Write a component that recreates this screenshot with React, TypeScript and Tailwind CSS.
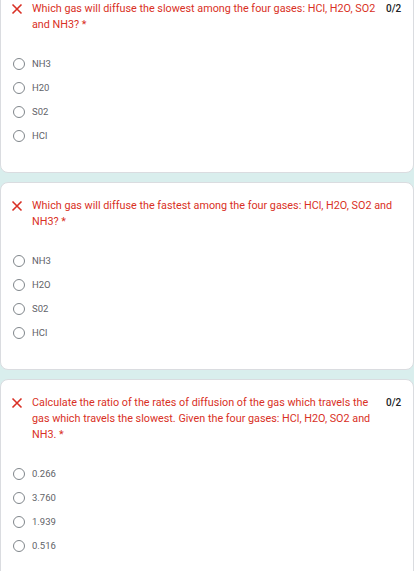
const questions = [
  {
    text: "Which gas will diffuse the slowest among the four gases: HCl, H2O, SO2 and NH3? *",
    score: "0/2",
    options: ["NH3", "H20", "S02", "HCl"],
  },
  {
    text: "Which gas will diffuse the fastest among the four gases: HCl, H2O, SO2 and NH3? *",
    score: "",
    options: ["NH3", "H2O", "S02", "HCl"],
  },
  {
    text: "Calculate the ratio of the rates of diffusion of the gas which travels the gas which travels the slowest. Given the four gases: HCl, H2O, SO2 and NH3. *",
    score: "0/2",
    options: ["0.266", "3.760", "1.939", "0.516"],
  },
];

function WrongIcon() {
  return (
    <svg width="12" height="12" viewBox="0 0 12 12" className="shrink-0 mt-[2px]">
      <path d="M1.5 1.5 L10.5 10.5 M10.5 1.5 L1.5 10.5" stroke="#d93025" strokeWidth="1.6" />
    </svg>
  );
}

function Radio() {
  return <span className="w-[12px] h-[12px] rounded-full border-[1.5px] border-[#80868b] shrink-0" />;
}

function QuestionCard({ q }: { q: (typeof questions)[number] }) {
  return (
    <div className="bg-white rounded-lg border border-[#dadce0] pt-[15px] pb-[24px] pl-[10px] pr-[13px]">
      <div className="flex items-start">
        <WrongIcon />
        <p className="flex-1 ml-[9px] text-[10.8px] leading-[16px] text-[#d93025]">{q.text}</p>
        {q.score && (
          <span className="w-[14px] ml-[5px] shrink-0 text-[10px] leading-[16px] font-medium text-[#202124]">
            {q.score}
          </span>
        )}
      </div>
      <div className="mt-[19px] flex flex-col pl-[2px]">
        {q.options.map((o) => (
          <label key={o} className="h-[24px] flex items-center gap-[7px]">
            <Radio />
            <span className="text-[9.5px] text-[#5f6368]">{o}</span>
          </label>
        ))}
      </div>
    </div>
  );
}

export default function App() {
  return (
    <div className="min-h-screen bg-white overflow-hidden" style={{ fontFamily: "Roboto, 'Liberation Sans', sans-serif" }}>
      <div className="w-[414px] -mt-[15px] bg-[#d9eeed] flex flex-col gap-[9px]">
        {questions.map((q, i) => (
          <QuestionCard key={i} q={q} />
        ))}
      </div>
    </div>
  );
}
